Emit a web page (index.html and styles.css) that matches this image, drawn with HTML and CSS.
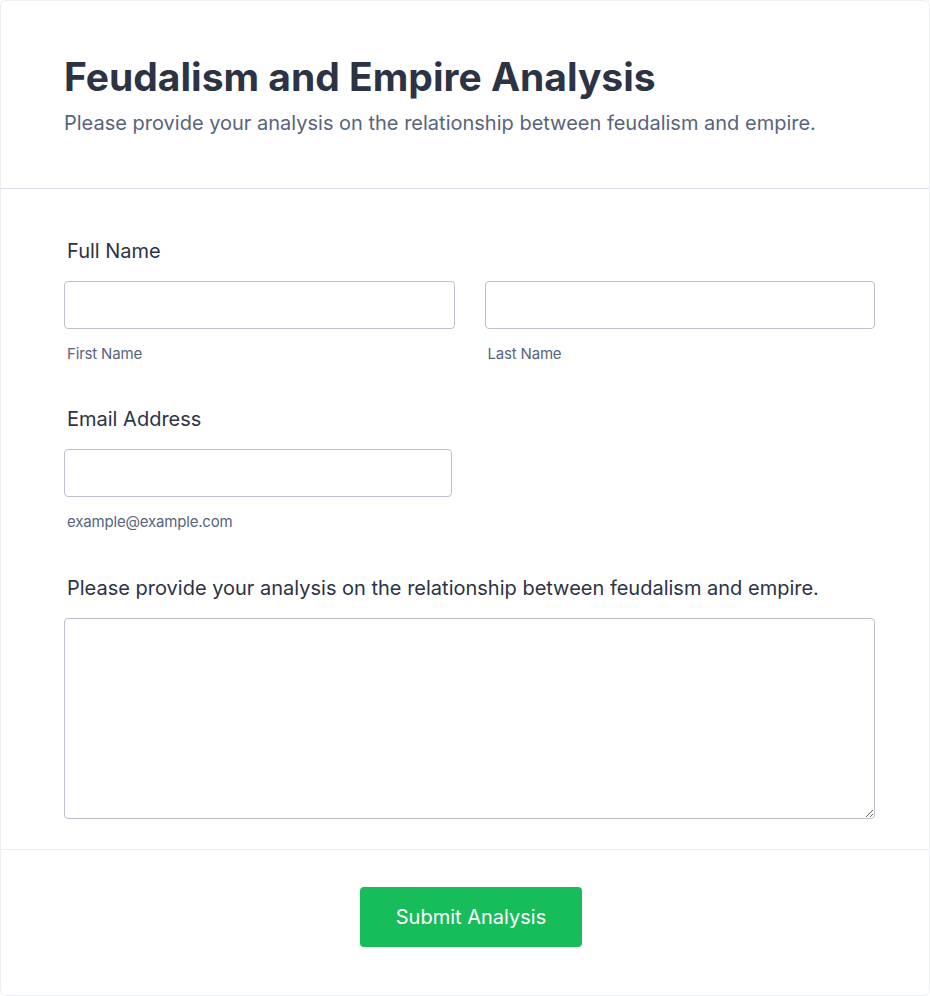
FILE: index.html
```html
<!DOCTYPE html>
<html lang="en">
<head>
<meta charset="utf-8">
<title>Feudalism and Empire Analysis</title>
<link rel="stylesheet" href="styles.css">
</head>
<body>
<div class="card">
  <header class="header">
    <h1 class="title">Feudalism and Empire Analysis</h1>
    <p class="subtitle">Please provide your analysis on the relationship between feudalism and empire.</p>
  </header>
  <form class="form">
    <div class="field name-field">
      <label class="label">Full Name</label>
      <div class="name-row">
        <div class="sub-field">
          <input class="input" type="text">
          <span class="hint">First Name</span>
        </div>
        <div class="sub-field">
          <input class="input" type="text">
          <span class="hint">Last Name</span>
        </div>
      </div>
    </div>
    <div class="field">
      <label class="label">Email Address</label>
      <div class="sub-field email">
        <input class="input" type="email">
        <span class="hint">example@example.com</span>
      </div>
    </div>
    <div class="field last">
      <label class="label">Please provide your analysis on the relationship between feudalism and empire.</label>
      <textarea class="textarea"></textarea>
    </div>
  </form>
  <footer class="footer">
    <button class="submit" type="button">Submit Analysis</button>
  </footer>
</div>
</body>
</html>
```

FILE: styles.css
```css
* { box-sizing: border-box; }

html, body {
  margin: 0;
  padding: 0;
  background: #ffffff;
}

body {
  font-family: Inter, "Noto Sans", "Liberation Sans", sans-serif;
  color: #2c3345;
}

.card {
  width: 930px;
  min-height: 996px;
  background: #ffffff;
  border: 1px solid #eceef4;
  border-radius: 6px;
  display: flex;
  flex-direction: column;
}

.header {
  padding: 53px 63px 51px 63px;
  border-bottom: 1px solid #dedcec;
}

.title {
  margin: 0;
  font-size: 39px;
  line-height: 46px;
  font-weight: 700;
  color: #2c3345;
}

.subtitle {
  margin: 10px 0 0 0;
  font-size: 20px;
  line-height: 27px;
  color: #57647e;
}

.form {
  padding: 48px 54px 30px 63px;
  border-bottom: 1px solid #eceef6;
}

.field {
  display: flex;
  flex-direction: column;
  margin-bottom: 42px;
}

.field.name-field { margin-bottom: 41px; }

.field.last { margin-bottom: 0; }

.label {
  font-size: 20px;
  line-height: 28px;
  font-weight: 400;
  color: #2c3345;
  padding-left: 3px;
  margin-bottom: 16px;
}

.name-row {
  display: flex;
  gap: 30px;
}

.sub-field {
  display: flex;
  flex-direction: column;
  width: 391px;
}

.sub-field.email { width: 388px; }

.input {
  width: 100%;
  height: 48px;
  border: 1px solid #bcc1cd;
  border-radius: 4px;
  background: #ffffff;
  font-family: inherit;
  font-size: 16px;
  padding: 0 12px;
}

.hint {
  margin-top: 15px;
  padding-left: 3px;
  font-size: 15px;
  line-height: 20px;
  color: #57647e;
  letter-spacing: -0.18px;
}

.textarea {
  width: 811px;
  height: 201px;
  border: 1px solid #bcc1cd;
  border-radius: 4px;
  background: #ffffff;
  font-family: inherit;
  font-size: 16px;
  padding: 10px 12px;
  resize: vertical;
}

.footer {
  display: flex;
  justify-content: center;
  padding: 37px 0 48px 12px;
}

.submit {
  width: 222px;
  height: 60px;
  border: none;
  border-radius: 4px;
  background: #18bd5b;
  color: #ffffff;
  font-family: inherit;
  font-size: 20px;
  font-weight: 400;
  cursor: pointer;
}
```
